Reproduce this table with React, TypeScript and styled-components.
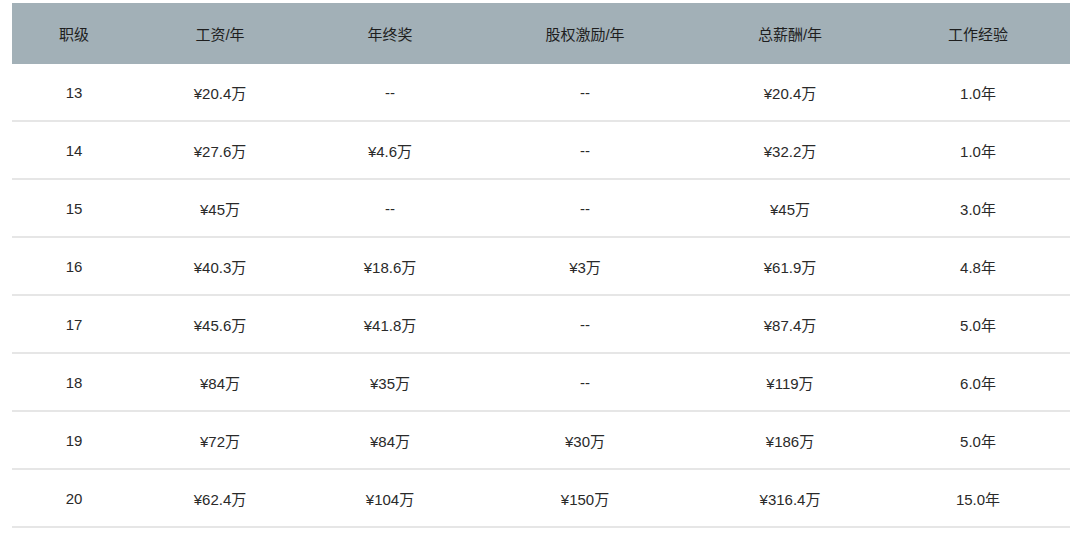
import React from "react";
import styled, { createGlobalStyle } from "styled-components";

const Global = createGlobalStyle`
  html, body { margin: 0; padding: 0; background: #ffffff; }
  body { font-family: "Liberation Sans", Arial, "Noto Sans CJK SC", sans-serif; }
`;

const Page = styled.div`
  padding: 3px 10px 0 12px;
  width: 1080px;
  box-sizing: border-box;
`;

const Table = styled.div`
  display: grid;
  grid-template-columns: 124px 168px 172px 218px 192px 184px;
  width: 1058px;
`;

const HeadCell = styled.div`
  height: 61px;
  background: #a2b0b7;
  display: flex;
  align-items: center;
  justify-content: center;
  font-size: 15px;
  color: #1e1e1e;
`;

const Cell = styled.div`
  height: 56px;
  border-bottom: 2px solid #e6e6e6;
  display: flex;
  align-items: center;
  justify-content: center;
  font-size: 15px;
  color: #2a2a2a;
`;

const headers = ["职级", "工资/年", "年终奖", "股权激励/年", "总薪酬/年", "工作经验"];

const rows: string[][] = [
  ["13", "¥20.4万", "--", "--", "¥20.4万", "1.0年"],
  ["14", "¥27.6万", "¥4.6万", "--", "¥32.2万", "1.0年"],
  ["15", "¥45万", "--", "--", "¥45万", "3.0年"],
  ["16", "¥40.3万", "¥18.6万", "¥3万", "¥61.9万", "4.8年"],
  ["17", "¥45.6万", "¥41.8万", "--", "¥87.4万", "5.0年"],
  ["18", "¥84万", "¥35万", "--", "¥119万", "6.0年"],
  ["19", "¥72万", "¥84万", "¥30万", "¥186万", "5.0年"],
  ["20", "¥62.4万", "¥104万", "¥150万", "¥316.4万", "15.0年"],
];

export default function App() {
  return (
    <Page>
      <Global />
      <Table>
        {headers.map((h) => (
          <HeadCell key={h}>{h}</HeadCell>
        ))}
        {rows.map((r, i) =>
          r.map((c, j) => <Cell key={`${i}-${j}`}>{c}</Cell>)
        )}
      </Table>
    </Page>
  );
}
